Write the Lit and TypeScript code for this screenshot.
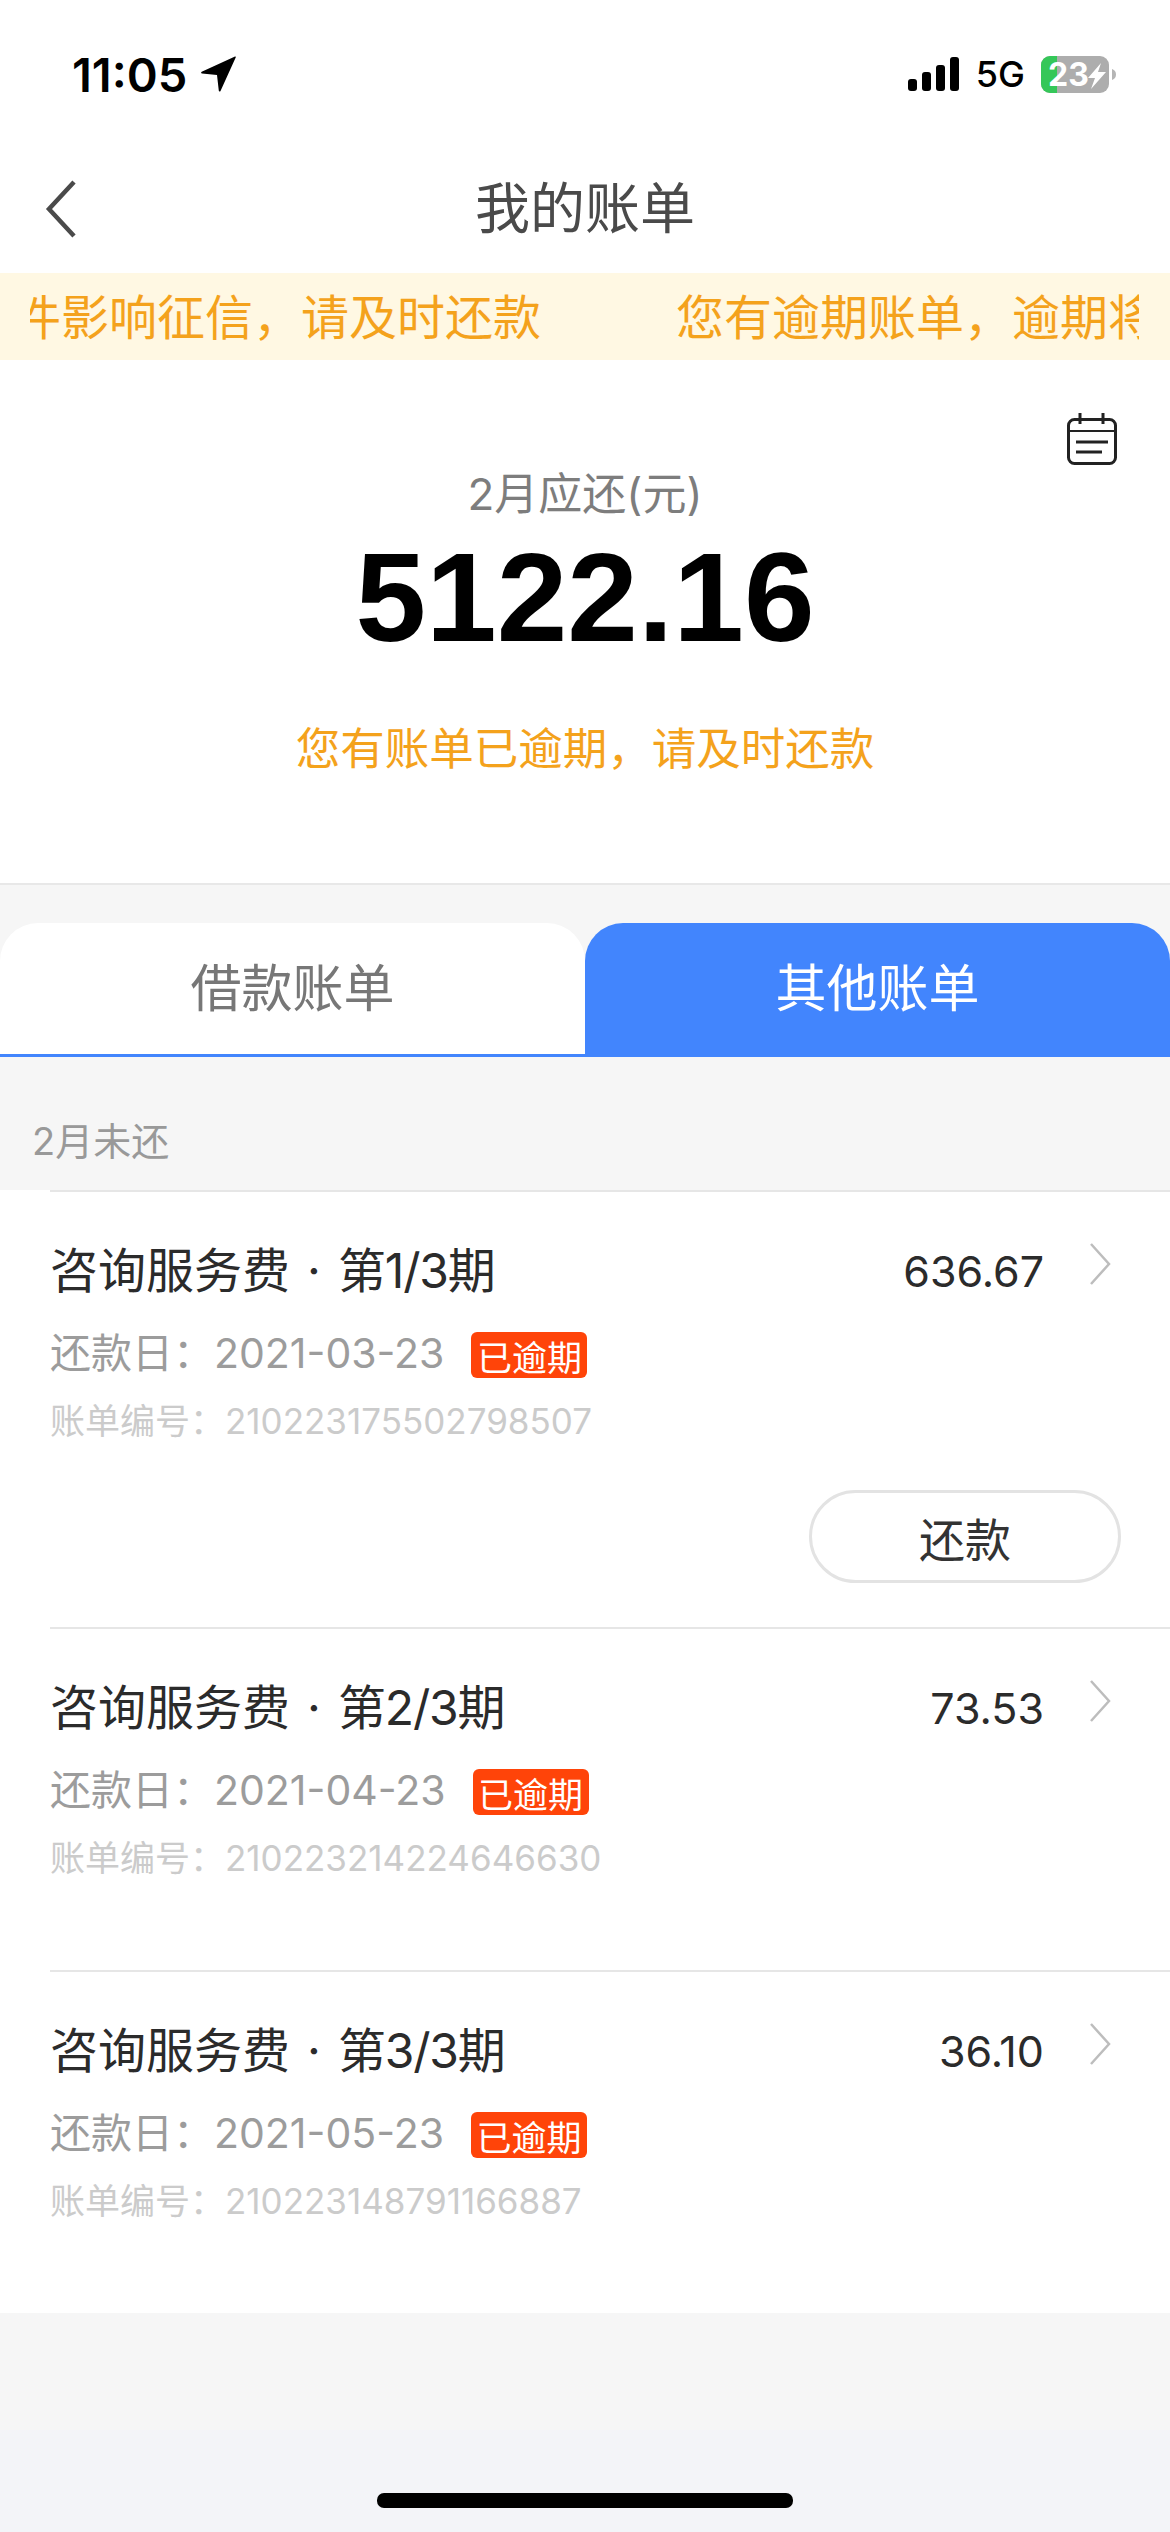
import { LitElement, css, html } from "lit";
import { customElement } from "lit/decorators.js";

const bills = [
  { term: "第1/3期", amount: "636.67", date: "2021-03-23", no: "210223175502798507", pay: true },
  { term: "第2/3期", amount: "73.53", date: "2021-04-23", no: "210223214224646630", pay: false },
  { term: "第3/3期", amount: "36.10", date: "2021-05-23", no: "210223148791166887", pay: false },
];

@customElement("app-root")
export class AppRoot extends LitElement {
  static styles = css`
    :host {
      display: block;
      width: 1170px;
      height: 2532px;
      overflow: hidden;
      position: relative;
      background: #f6f6f6;
      font-family: Inter, "Noto Sans CJK SC", sans-serif;
      color: #333;
    }
    .status {
      height: 140px;
      background: #fff;
      display: flex;
      justify-content: space-between;
      align-items: center;
      box-sizing: border-box;
      padding: 8px 53px 0 72px;
    }
    .time {
      display: flex;
      align-items: center;
      gap: 12px;
      font: 600 47px Inter, sans-serif;
      color: #000;
    }
    .indicators {
      display: flex;
      align-items: center;
      gap: 16px;
    }
    .net {
      font: 500 36px Inter, sans-serif;
      color: #000;
    }
    .battery {
      display: block;
    }
    .nav {
      height: 133px;
      background: #fff;
      display: flex;
      align-items: center;
      justify-content: center;
      position: relative;
      font-size: 55px;
      color: #4a4a4a;
      padding-bottom: 5px;
      box-sizing: border-box;
    }
    .back {
      position: absolute;
      left: 45px;
      top: 40px;
    }
    .notice {
      height: 87px;
      background: #fff8e3;
      padding: 0 31px 5px 30px;
      box-sizing: border-box;
      display: flex;
      align-items: center;
    }
    .notice-clip {
      flex: 1;
      overflow: hidden;
    }
    .notice-track {
      display: flex;
      gap: 135px;
      width: max-content;
      margin-left: -17px;
      font-size: 48px;
      color: #f4a21c;
      white-space: nowrap;
    }
    .hero {
      height: 525px;
      box-sizing: border-box;
      background: #fff;
      border-bottom: 2px solid #e8e8e8;
      position: relative;
      text-align: center;
      padding-top: 108px;
    }
    .calendar {
      position: absolute;
      right: 52px;
      top: 53px;
    }
    .hero-label {
      font-size: 44px;
      line-height: 52px;
      color: #7d7d7d;
    }
    .hero-amount {
      font-family: "Liberation Sans", sans-serif;
      font-size: 127px;
      line-height: 140px;
      font-weight: 700;
      color: #000;
      margin-top: 7px;
    }
    .hero-warn {
      font-size: 44.5px;
      line-height: 60px;
      color: #f4a21c;
      margin-top: 52px;
    }
    .tabs {
      display: flex;
      margin-top: 38px;
      height: 134px;
    }
    .tab {
      flex: 1;
      display: flex;
      align-items: center;
      justify-content: center;
      font-size: 51px;
      border-radius: 38px 38px 0 0;
      background: #fff;
      color: #777;
      box-sizing: border-box;
      padding-bottom: 10px;
    }
    .tab.off {
      border-bottom: 3px solid #4285fd;
      padding-bottom: 7px;
    }
    .tab.on {
      background: #4285fd;
      color: #fff;
    }
    .month {
      height: 133px;
      box-sizing: border-box;
      padding: 60px 0 0 32px;
      font-size: 38px;
      line-height: 48px;
      color: #999;
    }
    .list {
      background: #fff;
    }
    .bill {
      margin-left: 50px;
      border-top: 2px solid #e6e6e6;
      padding: 49px 50px 90px 0;
    }
    .bill.has-pay {
      padding-bottom: 44px;
    }
    .bill-head {
      display: flex;
      justify-content: space-between;
      align-items: center;
      height: 60px;
    }
    .bill-title {
      font-size: 48px;
      line-height: 60px;
      color: #2b2b2b;
    }
    .dot {
      display: inline-block;
      width: 48px;
      text-align: center;
    }
    .term {
      letter-spacing: -1.2px;
    }
    .bill-amount {
      font-size: 43px;
      color: #2b2b2b;
      display: flex;
      align-items: center;
      gap: 45px;
    }
    .chevron {
      margin-right: 9px;
      margin-top: -14px;
    }
    .bill-date {
      display: flex;
      align-items: center;
      gap: 27px;
      height: 46px;
      margin-top: 26px;
      font-size: 41px;
      color: #9c9c9c;
    }
    .badge {
      width: 116px;
      height: 46px;
      margin-top: 10px;
      border-radius: 6px;
      background: #ff4409;
      color: #fff;
      font-size: 35px;
      display: flex;
      align-items: center;
      justify-content: center;
    }
    .bill-no {
      font-size: 35px;
      line-height: 44px;
      margin-top: 26px;
      color: #cbcbcb;
    }
    .pay {
      display: flex;
      justify-content: flex-end;
      margin: 47px -1px 0 0;
    }
    .pay span {
      width: 312px;
      height: 93px;
      box-sizing: border-box;
      border: 3px solid #e3e3e3;
      border-radius: 47px;
      font-size: 46px;
      color: #333;
      display: flex;
      align-items: center;
      justify-content: center;
    }
    .home-bar {
      position: absolute;
      left: 0;
      right: 0;
      bottom: 0;
      height: 102px;
      background: #f3f4f8;
    }
    .home {
      position: absolute;
      left: 377px;
      top: 63px;
      width: 416px;
      height: 15px;
      border-radius: 7px;
      background: #000;
    }
  `;

  private renderBill(bill: (typeof bills)[number]) {
    return html`
      <div class="bill ${bill.pay ? "has-pay" : ""}">
        <div class="bill-head">
          <div class="bill-title">咨询服务费<span class="dot">·</span><span class="term">${bill.term}</span></div>
          <div class="bill-amount">
            ${bill.amount}
            <svg class="chevron" width="22" height="42" viewBox="0 0 22 42" fill="none">
              <path d="M2 1l18 20L2 41" stroke="#bdbdbd" stroke-width="2.5" />
            </svg>
          </div>
        </div>
        <div class="bill-date">
          <span>还款日：${bill.date}</span>
          <span class="badge">已逾期</span>
        </div>
        <div class="bill-no">账单编号：${bill.no}</div>
        ${bill.pay ? html`<div class="pay"><span>还款</span></div>` : ""}
      </div>
    `;
  }

  render() {
    return html`
      <div class="status">
        <div class="time">
          11:05
          <svg width="38" height="38" viewBox="0 0 38 38">
            <path d="M36 1.5c.6-.3 1 .1.8.7L21.5 36c-.4.9-1.600.8-1.700-.2L18 20 3 18.400c-1-.1-1.200-1.300-.3-1.700z" fill="#000" />
          </svg>
        </div>
        <div class="indicators">
          <svg width="52" height="34" viewBox="0 0 52 34" fill="#000">
            <rect x="0" y="22" width="9" height="12" rx="3" />
            <rect x="14" y="15" width="9" height="19" rx="3" />
            <rect x="28" y="8" width="9" height="26" rx="3" />
            <rect x="42" y="0" width="9" height="34" rx="3" />
          </svg>
          <span class="net">5G</span>
          <svg class="battery" width="76" height="37" viewBox="0 0 76 37">
            <rect x="0" y="0" width="68" height="37" rx="9" fill="#adadad" />
            <path d="M9 0h7v37H9a9 9 0 0 1-9-9V9a9 9 0 0 1 9-9z" fill="#35c759" />
            <path d="M71 13c3 1 4 3 4 5.500s-1 4.500-4 5.500z" fill="#b5b5b5" />
            <text x="7" y="30" font-family="Inter" font-weight="700" font-size="32" fill="#fff">23</text>
            <path d="M60 7L47 22h7l-4 11 15-17h-8z" fill="#fff" />
          </svg>
        </div>
      </div>
      <div class="nav">
        <svg class="back" width="32" height="58" viewBox="0 0 32 58" fill="none">
          <path d="M29 2L4 29l25 27" stroke="#4a4a4a" stroke-width="4.5" />
        </svg>
        我的账单
      </div>
      <div class="notice">
        <div class="notice-clip">
          <div class="notice-track"><span>件影响征信，请及时还款</span><span>您有逾期账单，逾期将</span></div>
        </div>
      </div>
      <div class="hero">
        <svg class="calendar" width="52" height="52" viewBox="0 0 52 52" fill="none" stroke="#222" stroke-width="3">
          <rect x="2.500" y="6.500" width="47" height="44" rx="6" />
          <path d="M14 0v11M37 0v11" />
          <path d="M2.500 18h47" stroke-width="2" />
          <path d="M10 29h32M10 39h26" />
        </svg>
        <div class="hero-label">2月应还(元)</div>
        <div class="hero-amount">5122.16</div>
        <div class="hero-warn">您有账单已逾期，请及时还款</div>
      </div>
      <div class="tabs">
        <div class="tab off">借款账单</div>
        <div class="tab on">其他账单</div>
      </div>
      <div class="month">2月未还</div>
      <div class="list">${bills.map((bill) => this.renderBill(bill))}</div>
      <div class="home-bar"><div class="home"></div></div>
    `;
  }
}
